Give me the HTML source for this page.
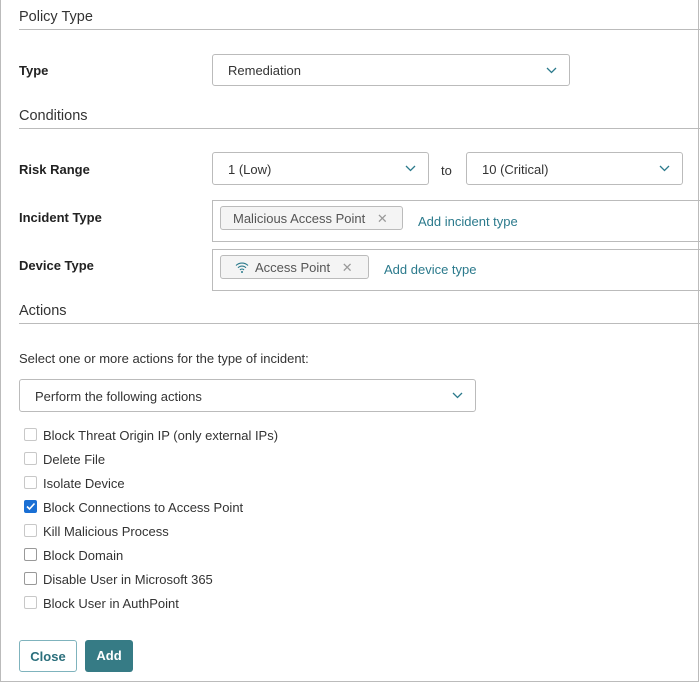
<html><head><style>
body{margin:0;width:700px;height:684px;font-family:"Liberation Sans",sans-serif;font-size:13px;color:#333;background:#fff;position:relative;overflow:hidden}
.a{position:absolute}
.frame{left:0;top:0;width:697px;height:681px;border:1px solid #bbb;border-top:none}
.h{left:19px;font-size:14.5px;color:#333}
.ln{left:19px;right:0;height:1px;background:#bbb}
.lb{left:19px;font-weight:bold;font-size:13px;color:#222}
.sel{border:1px solid #bbb;border-radius:3px;box-sizing:border-box;padding:0 15px;line-height:32px;color:#333}
.sel svg{position:absolute;right:12px;top:12px}
.box{border:1px solid #bbb;border-right:none;box-sizing:border-box}
.chip{border:1px solid #bbb;border-radius:3px;background:#f4f4f4;box-sizing:border-box;height:24px;line-height:23px;padding-left:12px;color:#555}
.link{color:#2b7a8c}
.cb{left:24px;width:13px;height:13px;border:1px solid #c8c8c8;border-radius:2px;box-sizing:border-box}
.ct{left:43px;font-size:13px;color:#333}
</style></head><body>
<div class="a frame"></div>
<div class="a h" style="top:9px">Policy Type</div>
<div class="a ln" style="top:29px"></div>
<div class="a lb" style="top:63px">Type</div>
<div class="a sel" style="left:212px;top:54px;width:358px;height:32px">Remediation<svg width="11" height="7"><path d="M1 1l4.5 4.5L10 1" fill="none" stroke="#2b7a8c" stroke-width="1.3"/></svg></div>
<div class="a h" style="top:108px">Conditions</div>
<div class="a ln" style="top:128px"></div>
<div class="a lb" style="top:162px">Risk Range</div>
<div class="a sel" style="left:212px;top:152px;width:217px;height:33px;line-height:34px">1 (Low)<svg width="11" height="7"><path d="M1 1l4.5 4.5L10 1" fill="none" stroke="#2b7a8c" stroke-width="1.3"/></svg></div>
<div class="a" style="left:441px;top:163px">to</div>
<div class="a sel" style="left:466px;top:152px;width:217px;height:33px;line-height:34px">10 (Critical)<svg width="11" height="7"><path d="M1 1l4.5 4.5L10 1" fill="none" stroke="#2b7a8c" stroke-width="1.3"/></svg></div>
<div class="a lb" style="top:210px">Incident Type</div>
<div class="a box" style="left:212px;top:200px;width:488px;height:42px"></div>
<div class="a chip" style="left:220px;top:206px;width:183px">Malicious Access Point <span style="color:#999;margin-left:8px">✕</span></div>
<div class="a link" style="left:418px;top:214px">Add incident type</div>
<div class="a lb" style="top:258px">Device Type</div>
<div class="a box" style="left:212px;top:249px;width:488px;height:42px"></div>
<div class="a chip" style="left:220px;top:255px;width:149px;padding-left:14px"><svg width="14" height="12" style="vertical-align:-1px;margin-right:6px"><path d="M1 4.5a8.5 8.5 0 0 1 12 0M3 6.8a5.5 5.5 0 0 1 8 0M5 9a2.5 2.5 0 0 1 4 0" fill="none" stroke="#2b7a8c" stroke-width="1.1"/><circle cx="7" cy="11" r="1" fill="#2b7a8c"/></svg>Access Point <span style="color:#999;margin-left:8px">✕</span></div>
<div class="a link" style="left:384px;top:262px">Add device type</div>
<div class="a h" style="top:303px">Actions</div>
<div class="a ln" style="top:323px"></div>
<div class="a" style="left:19px;top:351px">Select one or more actions for the type of incident:</div>
<div class="a sel" style="left:19px;top:379px;width:457px;height:33px;line-height:34px">Perform the following actions<svg width="11" height="7"><path d="M1 1l4.5 4.5L10 1" fill="none" stroke="#2b7a8c" stroke-width="1.3"/></svg></div>
<div class="a cb" style="top:428px"></div><div class="a ct" style="top:428px">Block Threat Origin IP (only external IPs)</div>
<div class="a cb" style="top:452px"></div><div class="a ct" style="top:452px">Delete File</div>
<div class="a cb" style="top:476px"></div><div class="a ct" style="top:476px">Isolate Device</div>
<div class="a cb" style="top:500px;background:#1a6fd4;border-color:#1a6fd4"><svg width="11" height="11" style="position:absolute;left:0;top:0"><path d="M2 5.5l2.5 2.5L9.5 2.5" fill="none" stroke="#fff" stroke-width="1.6"/></svg></div><div class="a ct" style="top:500px">Block Connections to Access Point</div>
<div class="a cb" style="top:524px"></div><div class="a ct" style="top:524px">Kill Malicious Process</div>
<div class="a cb" style="top:548px;border-color:#999"></div><div class="a ct" style="top:548px">Block Domain</div>
<div class="a cb" style="top:572px;border-color:#999"></div><div class="a ct" style="top:572px">Disable User in Microsoft 365</div>
<div class="a cb" style="top:596px"></div><div class="a ct" style="top:596px">Block User in AuthPoint</div>
<div class="a" style="left:19px;top:640px;width:58px;height:32px;box-sizing:border-box;border:1px solid #7fb3bd;border-radius:3px;text-align:center;line-height:31px;font-weight:bold;color:#2b6f7c">Close</div>
<div class="a" style="left:85px;top:640px;width:48px;height:32px;background:#367b85;border-radius:3px;text-align:center;line-height:32px;font-weight:bold;color:#fff">Add</div>
</body></html>
